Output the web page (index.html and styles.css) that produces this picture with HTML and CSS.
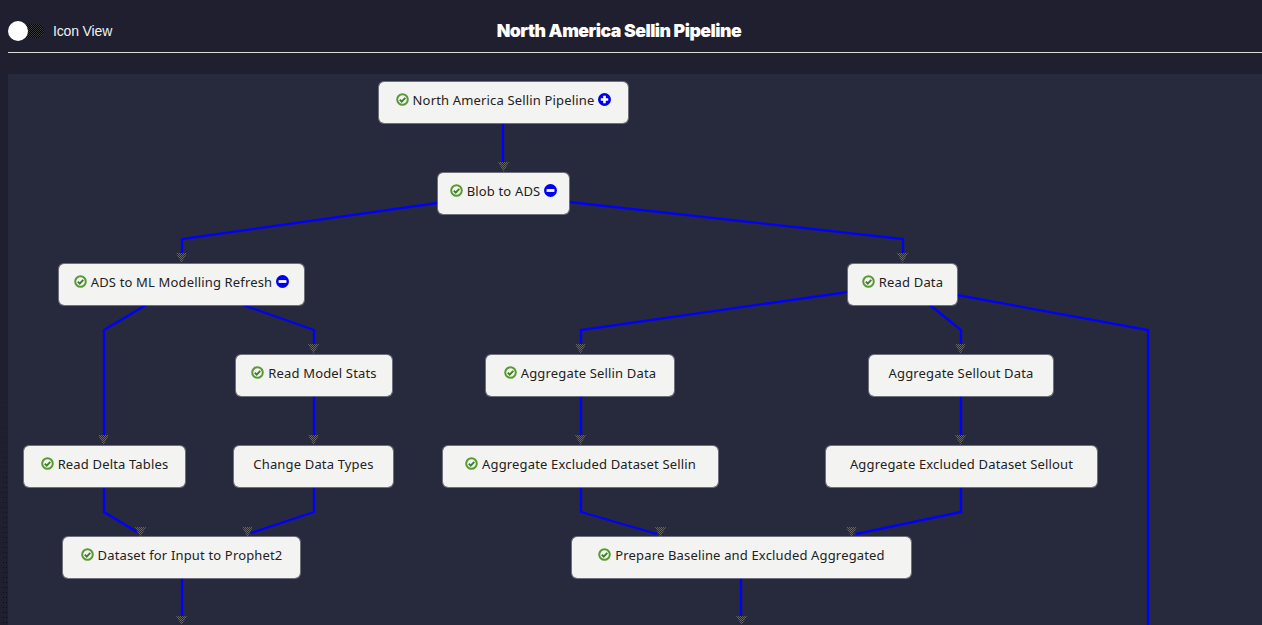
FILE: index.html
```html
<!DOCTYPE html>
<html lang="en">
<head>
<meta charset="utf-8">
<title>North America Sellin Pipeline</title>
<link rel="stylesheet" href="styles.css">
</head>
<body>
<svg width="0" height="0" class="defs">
  <symbol id="ok" viewBox="0 0 13 13">
    <circle cx="6.500" cy="6.500" r="5.300" fill="none" stroke="#5a9a32" stroke-width="2"/>
    <path d="M3.800 6.700 5.700 8.600 9.300 4.900" fill="none" stroke="#3f7f2a" stroke-width="1.900"/>
  </symbol>
  <symbol id="plus" viewBox="0 0 13 13">
    <circle cx="6.500" cy="6.500" r="6.500" fill="#0000f0"/>
    <path d="M6.500 2.800v7.400M2.800 6.500h7.400" stroke="#fff" stroke-width="2.600"/>
  </symbol>
  <symbol id="minus" viewBox="0 0 13 13">
    <circle cx="6.500" cy="6.500" r="6.500" fill="#0000f0"/>
    <path d="M2.600 6.500h7.800" stroke="#fff" stroke-width="2.800"/>
  </symbol>
  <pattern id="dither" width="2" height="2" patternUnits="userSpaceOnUse">
    <rect width="1" height="1" fill="#656568"/>
    <rect x="1" y="1" width="1" height="1" fill="#656568"/>
  </pattern>
</svg>
<div class="grain"></div>
<header class="topbar">
  <div class="toggle">
    <span class="switch"><span class="knob"></span></span>
    <span class="toggle-label">Icon View</span>
  </div>
  <h1 class="title">North America Sellin Pipeline</h1>
  <div></div>
</header>
<main class="canvas">
  <svg class="edges" width="1254" height="551" viewBox="8 74 1254 551">
    <g class="lines">
      <path d="M503 123V164"/>
      <path d="M438 203 182 239V255"/>
      <path d="M569 202 903 239V255"/>
      <path d="M146 305 104 330V437"/>
      <path d="M243 305 314 330V346"/>
      <path d="M848 292 581 330V346"/>
      <path d="M930 305 961 330V346"/>
      <path d="M957 295 1148 330V625"/>
      <path d="M314 396V437"/>
      <path d="M581 396V437"/>
      <path d="M961 396V437"/>
      <path d="M104 487V512L137 532"/>
      <path d="M314 487V512L251 533"/>
      <path d="M581 487V512L657 534"/>
      <path d="M961 487V512L856 534"/>
      <path d="M182 578V619"/>
      <path d="M741 578V619"/>
    </g>
    <g class="heads">
      <path d="M498 162h11l-5.500 10z"/>
      <path d="M176 253h11l-5.500 10z"/>
      <path d="M897 253h11l-5.500 10z"/>
      <path d="M98 435h11l-5.500 10z"/>
      <path d="M308 344h11l-5.500 10z"/>
      <path d="M575 344h11l-5.500 10z"/>
      <path d="M955 344h11l-5.500 10z"/>
      <path d="M308 435h11l-5.500 10z"/>
      <path d="M575 435h11l-5.500 10z"/>
      <path d="M955 435h11l-5.500 10z"/>
      <path d="M135 527h11l-5.500 10z"/>
      <path d="M242 527h11l-5.500 10z"/>
      <path d="M655 527h11l-5.500 10z"/>
      <path d="M846 527h11l-5.500 10z"/>
      <path d="M176 616h11l-5.500 9z"/>
      <path d="M736 616h11l-5.500 9z"/>
    </g>
  </svg>
  <div class="node n1"><svg class="ic"><use href="#ok"/></svg><span>North America Sellin Pipeline</span><svg class="ic"><use href="#plus"/></svg></div>
  <div class="node n2"><svg class="ic"><use href="#ok"/></svg><span>Blob to ADS</span><svg class="ic"><use href="#minus"/></svg></div>
  <div class="node n3"><svg class="ic"><use href="#ok"/></svg><span>ADS to ML Modelling Refresh</span><svg class="ic"><use href="#minus"/></svg></div>
  <div class="node n4"><svg class="ic"><use href="#ok"/></svg><span>Read Data</span></div>
  <div class="node n5"><svg class="ic"><use href="#ok"/></svg><span>Read Model Stats</span></div>
  <div class="node n6"><svg class="ic"><use href="#ok"/></svg><span>Aggregate Sellin Data</span></div>
  <div class="node n7"><span>Aggregate Sellout Data</span></div>
  <div class="node n8"><svg class="ic"><use href="#ok"/></svg><span>Read Delta Tables</span></div>
  <div class="node n9"><span>Change Data Types</span></div>
  <div class="node n10"><svg class="ic"><use href="#ok"/></svg><span>Aggregate Excluded Dataset Sellin</span></div>
  <div class="node n11"><span>Aggregate Excluded Dataset Sellout</span></div>
  <div class="node n12"><svg class="ic"><use href="#ok"/></svg><span>Dataset for Input to Prophet2</span></div>
  <div class="node n13"><svg class="ic"><use href="#ok"/></svg><span>Prepare Baseline and Excluded Aggregated</span></div>
</main>
</body>
</html>
```
FILE: styles.css
```css
* { box-sizing: border-box; }
html, body { margin: 0; height: 625px; overflow: hidden; }
body { background: #1f1f2f; font-family: "Noto Sans", sans-serif; padding: 0 0 0 8px; }
.defs { position: absolute; }
.grain {
  position: absolute;
  left: 2px;
  top: 365px;
  width: 5px;
  height: 260px;
  background-image: radial-gradient(circle, #0a0a12 0.7px, transparent 0.9px);
  background-size: 3px 5px;
  -webkit-mask-image: linear-gradient(transparent, #000);
  mask-image: linear-gradient(transparent, #000);
}
.topbar {
  height: 53px;
  border-bottom: 1px solid #dcdcdc;
  display: grid;
  grid-template-columns: 1fr auto 1fr;
  align-items: center;
  padding: 9px 32px 0 0;
}
.toggle { display: flex; align-items: center; gap: 9px; }
.switch {
  width: 36px;
  height: 14px;
  display: block;
  position: relative;
  border-radius: 7px;
  background: repeating-conic-gradient(#000 0 25%, #3a3a3a 0 50%) 0 0 / 2px 2px;
}
.knob { position: absolute; left: 0; top: -3px; width: 20px; height: 20px; border-radius: 50%; background: #fff; }
.toggle-label { color: #f0f0f0; font: 14px "Liberation Sans", sans-serif; letter-spacing: -0.15px; }
.title {
  margin: 0;
  color: #fff;
  font: 900 17.700px/20px "Inter", sans-serif;
  letter-spacing: -0.5px;
}
.canvas { position: relative; margin-top: 21px; height: 551px; background: #27293d; overflow: hidden; }
.edges { position: absolute; left: 0; top: 0; }
.lines path { fill: none; stroke: #0000ff; stroke-width: 2.300; }
.heads path { fill: url(#dither); }
.node {
  position: absolute;
  height: 43px;
  background: #f3f3f2 padding-box;
  border-radius: 6px;
  border: 1px solid rgba(170, 170, 175, 0.55);
  display: flex;
  align-items: center;
  justify-content: center;
  gap: 4px;
  padding-bottom: 6px;
  color: #222;
  font-size: 13px;
  letter-spacing: 0.16px;
  white-space: nowrap;
}
.ic { width: 13px; height: 13px; flex: none; }
.n1 { left: 370px; top: 7px; width: 251px; }
.n2 { left: 429px; top: 98px; width: 133px; }
.n3 { left: 50px; top: 189px; width: 247px; }
.n4 { left: 839px; top: 189px; width: 111px; }
.n5 { left: 227px; top: 280px; width: 158px; }
.n6 { left: 477px; top: 280px; width: 190px; }
.n7 { left: 860px; top: 280px; width: 186px; }
.n8 { left: 15px; top: 371px; width: 163px; }
.n9 { left: 225px; top: 371px; width: 161px; }
.n10 { left: 434px; top: 371px; width: 277px; }
.n11 { left: 817px; top: 371px; width: 273px; }
.n12 { left: 54px; top: 462px; width: 239px; }
.n13 { left: 563px; top: 462px; width: 341px; }
```
